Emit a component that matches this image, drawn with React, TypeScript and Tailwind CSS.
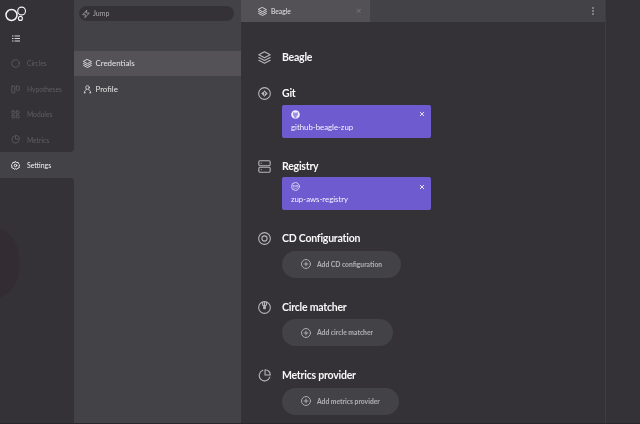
import React from "react";

type IconProps = { className?: string; children: React.ReactNode; weight?: number };

function Icon({ className = "", children, weight = 1.8 }: IconProps) {
  return (
    <svg
      viewBox="0 0 24 24"
      fill="none"
      stroke="currentColor"
      strokeWidth={weight}
      strokeLinecap="round"
      strokeLinejoin="round"
      className={`block shrink-0 ${className}`}
    >
      {children}
    </svg>
  );
}

const layers = (
  <>
    <path d="M12 1.500 22.500 7 12 12.500 1.500 7Z" />
    <path d="m1.500 12 10.500 5.500 10.500-5.500" />
    <path d="m1.500 17 10.500 5.500 10.500-5.500" />
  </>
);

const pie = (
  <>
    <path d="M9 2.500A10 10 0 1 0 21.800 15" />
    <path d="M13 1.300A9.700 9.700 0 0 1 22.700 11H13Z" />
  </>
);

const close = <path d="M5 5 19 19M19 5 5 19" />;

const navItems = [
  { label: "Circles", icon: <circle cx="12" cy="12" r="10" /> },
  {
    label: "Hypotheses",
    icon: (
      <>
        <rect x="2" y="3" width="8" height="18" rx="1" />
        <rect x="14" y="3" width="8" height="11" rx="1" />
      </>
    ),
  },
  {
    label: "Modules",
    icon: (
      <>
        <rect x="2.5" y="2.5" width="7.5" height="7.5" rx="1" />
        <rect x="14" y="2.5" width="7.5" height="7.5" rx="1" />
        <rect x="2.5" y="14" width="7.5" height="7.5" rx="1" />
        <rect x="14" y="14" width="7.5" height="7.5" rx="1" />
      </>
    ),
  },
  { label: "Metrics", icon: pie },
];

function Sidebar() {
  return (
    <aside className="flex w-[74px] shrink-0 flex-col bg-[#434246]">
      <div className="h-[152px] rounded-br bg-[#343237]">
        <svg viewBox="0 0 22 16" fill="none" stroke="#f4f4f5" className="ml-[5px] block h-[16px] w-[22px] translate-y-[6px]">
          <circle cx="6.5" cy="9" r="5.5" strokeWidth="1.5" />
          <circle cx="16.6" cy="5" r="3.9" strokeWidth="1.1" />
          <circle cx="15.4" cy="12.4" r="2" strokeWidth="1.1" />
        </svg>
        <div className="flex h-[35px] items-end pl-[12px]">
          <svg viewBox="0 0 8 7" fill="#d4d4d6" className="mb-[9px] block h-[7px] w-[8px]">
            <path d="M0 .5h1.5v1H0zM2.5 .5H8v1H2.5zM0 3h1.5v1H0zM2.5 3H8v1H2.5zM0 5.5h1.5v1H0zM2.5 5.5H8v1H2.5z" />
          </svg>
        </div>
        {navItems.map((item) => (
          <div key={item.label} className="flex h-[25.4px] items-center text-[#5e5d62]">
            <Icon className="ml-[11px] h-[9px] w-[9px]" weight={2.2}>{item.icon}</Icon>
            <span className="ml-[7px] text-[6.7px] leading-none">{item.label}</span>
          </div>
        ))}
      </div>
      <div className="flex h-[26px] items-center text-[#f4f4f5]">
        <Icon className="ml-[11px] h-[9px] w-[9px]" weight={2.6}>
          <path d="M12 1.5 15 4l4-.2 1.2 3.8 2.8 2.7-1.5 3.5.5 4-3.8 1.2L15.500 22 12 20.500 8.500 22 5.800 19 2 17.800l.5-4L1 10.300l2.800-2.700L5 3.800 9 4Z" />
          <circle cx="12" cy="12" r="3.4" />
        </Icon>
        <span className="ml-[7px] text-[6.9px] leading-none">Settings</span>
      </div>
      <div className="flex-1 overflow-hidden rounded-tr bg-[#343237]">
        <div className="-ml-[46px] mt-[47px] h-[76px] w-[65px] rounded-full bg-[#332d33]" />
      </div>
    </aside>
  );
}

function SettingsMenu() {
  return (
    <section className="w-[167px] shrink-0 bg-[#434246] text-[#e4e4e5]">
      <div className="h-[51px] pl-[5px] pt-[6px]">
        <div className="flex h-[15px] w-[155px] items-center rounded-full bg-[#343237] text-[#aaa9ac]">
          <Icon className="ml-[3px] h-[8px] w-[8px]" weight={2.2}>
            <path d="M14 1 2 14h8l-1 9 13-14h-9Z" />
          </Icon>
          <span className="ml-[3px] text-[7px] leading-none">Jump</span>
        </div>
      </div>
      <div className="flex h-[25px] items-center bg-[#545257]">
        <Icon className="ml-[8.500px] h-[9px] w-[9px]" weight={2.4}>{layers}</Icon>
        <span className="ml-[4px] text-[7.9px] leading-none">Credentials</span>
      </div>
      <div className="flex h-[27px] items-center">
        <Icon className="ml-[8.500px] h-[8.500px] w-[9px]" weight={2.2}>
          <circle cx="12" cy="7" r="5" />
          <path d="M3 22c0-5 2.500-8 6-9M21 22c0-5-2.500-8-6-9M3 22h3M18 22h3" />
        </Icon>
        <span className="ml-[4px] text-[7.9px] leading-none">Profile</span>
      </div>
    </section>
  );
}

function Heading({ icon, title }: { icon: React.ReactNode; title: string }) {
  return (
    <div className="flex h-[14px] items-center">
      <Icon className="h-[13px] w-[13px] text-[#b7b6b9]" weight={2}>{icon}</Icon>
      <h2 className="ml-[11px] text-[10.5px] font-bold leading-none tracking-[-0.22px] text-[#f8f8f9]">{title}</h2>
    </div>
  );
}

function Card({ icon, name }: { icon: React.ReactNode; name: string }) {
  return (
    <div className="ml-[24px] mt-[4px] h-[33px] w-[149px] rounded-[2px] bg-[#6f5bd0] pl-[9px] pr-[6px] pt-[5px] text-[#f6f4ff]">
      <div className="flex h-[9px] items-center justify-between">
        {icon}
        <Icon className="h-[6px] w-[6px]" weight={3.6}>{close}</Icon>
      </div>
      <p className="mt-[3.4px] text-[7.8px] leading-[10px]">{name}</p>
    </div>
  );
}

function AddButton({ label, className }: { label: string; className: string }) {
  return (
    <button className={`ml-[24px] mt-[5px] flex h-[27px] items-center rounded-full bg-[#434246] pl-[19px] text-[#acabae] ${className}`}>
      <Icon className="h-[10px] w-[10px]" weight={2.4}>
        <circle cx="12" cy="12" r="10.800" />
        <path d="M12 7.500v9M7.500 12h9" />
      </Icon>
      <span className="ml-[6px] whitespace-nowrap text-[6.7px] font-black leading-none">{label}</span>
    </button>
  );
}

function Workspace() {
  return (
    <main className="w-[365px] shrink-0 border-r border-[#3e3d41] bg-[#343237]">
      <header className="flex h-[22px] items-center bg-[#434246]">
        <div className="flex h-full w-[129px] items-center bg-[#535156] text-[#e4e4e5]">
          <Icon className="ml-[17px] h-[9px] w-[9px]" weight={2.3}>{layers}</Icon>
          <span className="ml-[4px] text-[6.7px] leading-none">Beagle</span>
          <Icon className="ml-auto mr-[8.500px] h-[5.500px] w-[5.500px] text-[#88878b]" weight={2.8}>{close}</Icon>
        </div>
        <svg viewBox="0 0 2 8" fill="#cfcfd1" className="ml-auto mr-[11px] block h-[8px] w-[2px]">
          <circle cx="1" cy="1" r=".8" />
          <circle cx="1" cy="4" r=".8" />
          <circle cx="1" cy="7" r=".8" />
        </svg>
      </header>
      <div className="pl-[17px] pt-[28px]">
        <section className="h-[36.500px]">
          <Heading icon={layers} title="Beagle" />
        </section>
        <section className="h-[72.500px]">
          <Heading
            title="Git"
            icon={
              <>
                <circle cx="12" cy="12" r="10.800" />
                <path d="m12 6 6 6-6 6-6-6Z" fill="currentColor" stroke="none" />
                <path d="m10 8 4 4M12 10v5" stroke="#343237" strokeWidth="1.200" />
              </>
            }
          />
          <Card
            name="github-beagle-zup"
            icon={
              <svg viewBox="0 0 24 24" className="block h-[9px] w-[9px]">
                <circle cx="12" cy="12" r="11.500" fill="#f0edff" />
                <path d="M6 5.500 10 7h4l4-1.500.5 6c0 3-1.500 4.500-4 5V22h-5v-3l-3-1 3-.5c-2.500-.5-4-2.500-4-5.500Z" fill="#6f5bd0" opacity=".65" />
              </svg>
            }
          />
        </section>
        <section className="h-[72.500px]">
          <Heading
            title="Registry"
            icon={
              <>
                <rect x="1.500" y="1.500" width="21" height="9" rx="2" />
                <rect x="1.500" y="13.500" width="21" height="9" rx="2" />
                <path d="M6 6h.2M6 18h.2" strokeWidth="2.200" />
              </>
            }
          />
          <Card
            name="zup-aws-registry"
            icon={
              <Icon className="h-[9px] w-[9px]" weight={2}>
                <circle cx="12" cy="12" r="10.500" />
                <path d="M6 9v3M6 10h3v2M11 9v3l2-1 2 1V9M18 9h-2v1.500h2V12M6 15c4 3 8 3 12 0" strokeWidth="1.300" />
              </Icon>
            }
          />
        </section>
        <section className="h-[68.500px]">
          <Heading
            title="CD Configuration"
            icon={
              <>
                <circle cx="12" cy="12" r="10.800" />
                <circle cx="12" cy="12" r="4.800" />
              </>
            }
          />
          <AddButton label="Add CD configuration" className="w-[119px]" />
        </section>
        <section className="h-[68.500px]">
          <Heading
            title="Circle matcher"
            icon={
              <>
                <circle cx="12" cy="12" r="10.800" />
                <path d="M8.500 2.500v4.500l2 2.500V14h3V9.500l2-2.500V2.500M12 3v10" />
              </>
            }
          />
          <AddButton label="Add circle matcher" className="w-[111px]" />
        </section>
        <section>
          <Heading icon={pie} title="Metrics provider" />
          <AddButton label="Add metrics provider" className="w-[117px]" />
        </section>
      </div>
    </main>
  );
}

export default function App() {
  return (
    <div className="flex h-[424px] w-[640px] overflow-hidden border-b border-[#2a272b] bg-[#343237] font-['Lato',sans-serif] antialiased will-change-transform">
      <Sidebar />
      <SettingsMenu />
      <Workspace />
    </div>
  );
}
